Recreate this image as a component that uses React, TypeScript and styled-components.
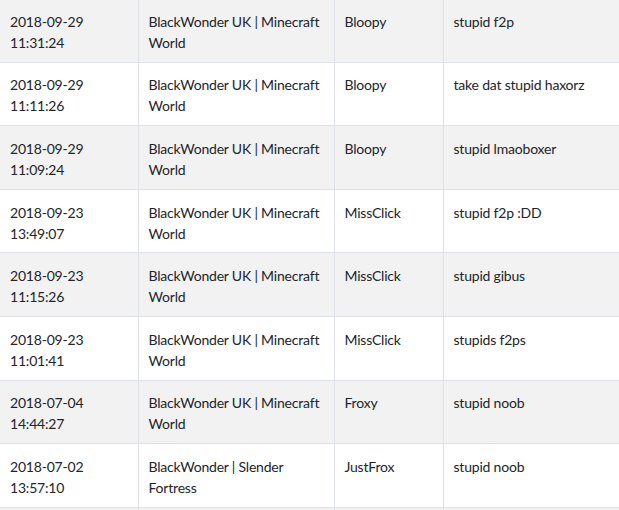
import React from "react";
import styled, { createGlobalStyle } from "styled-components";

const Global = createGlobalStyle`
  html, body { margin: 0; padding: 0; background: #fff; overflow: hidden; }
  body { font-family: "Segoe UI", Lato, "Noto Sans", "Liberation Sans", sans-serif; }
`;

const Table = styled.table`
  width: 619px;
  margin-top: -2px;
  border-collapse: collapse;
  table-layout: fixed;
  font-size: 14px;
  line-height: 21px;
  letter-spacing: -0.2px;
  color: #212529;
`;

const Col = styled.col<{ $w?: number }>`
  width: ${(p) => (p.$w ? `${p.$w}px` : "auto")};
`;

const Row = styled.tr<{ $striped: boolean }>`
  background: ${(p) => (p.$striped ? "#f2f2f2" : "#ffffff")};
`;

const Cell = styled.td`
  padding: 11.8px 10px 8.8px;
  vertical-align: top;
  border-top: 1px solid #dee2e6;
  border-left: 1px solid #dee2e6;
  &:first-child { border-left: none; }
`;

const rows = [
  ["2018-09-29 11:31:24", "BlackWonder UK | Minecraft World", "Bloopy", "stupid f2p"],
  ["2018-09-29 11:11:26", "BlackWonder UK | Minecraft World", "Bloopy", "take dat stupid haxorz"],
  ["2018-09-29 11:09:24", "BlackWonder UK | Minecraft World", "Bloopy", "stupid lmaoboxer"],
  ["2018-09-23 13:49:07", "BlackWonder UK | Minecraft World", "MissClick", "stupid f2p :DD"],
  ["2018-09-23 11:15:26", "BlackWonder UK | Minecraft World", "MissClick", "stupid gibus"],
  ["2018-09-23 11:01:41", "BlackWonder UK | Minecraft World", "MissClick", "stupids f2ps"],
  ["2018-07-04 14:44:27", "BlackWonder UK | Minecraft World", "Froxy", "stupid noob"],
  ["2018-07-02 13:57:10", "BlackWonder | Slender Fortress", "JustFrox", "stupid noob"],
  ["", "", "", ""],
];

export default function App() {
  return (
    <>
      <Global />
      <Table>
        <colgroup>
          <Col $w={138} />
          <Col $w={196} />
          <Col $w={109} />
          <Col />
        </colgroup>
        <tbody>
          {rows.map((r, i) => (
            <Row key={i} $striped={i % 2 === 0}>
              {r.map((c, j) => (
                <Cell key={j}>{c || "\u00a0"}</Cell>
              ))}
            </Row>
          ))}
        </tbody>
      </Table>
    </>
  );
}
